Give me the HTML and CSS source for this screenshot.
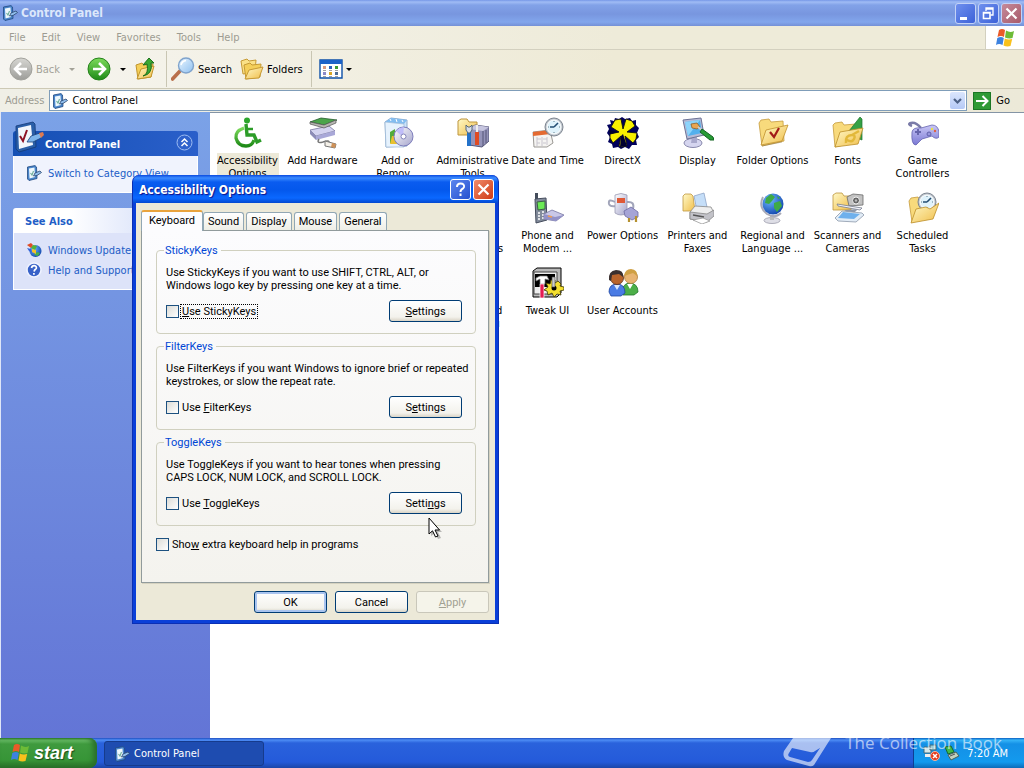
FILE: index.html
```html
<!DOCTYPE html>
<html lang="en">
<head>
<meta charset="utf-8">
<title>Control Panel</title>
<link rel="stylesheet" href="styles.css">
</head>
<body>
<svg class="defs" aria-hidden="true">
  <defs>
    <linearGradient id="gFolder" x1="0" y1="0" x2="1" y2="1"><stop offset="0" stop-color="#fff9c8"/><stop offset="1" stop-color="#f0bd48"/></linearGradient>
    <linearGradient id="gGreen" x1="0" y1="0" x2="0" y2="1"><stop offset="0" stop-color="#7ddb5c"/><stop offset="1" stop-color="#1e8a17"/></linearGradient>
    <linearGradient id="gGrey" x1="0" y1="0" x2="0" y2="1"><stop offset="0" stop-color="#d6d6d2"/><stop offset="1" stop-color="#9d9d99"/></linearGradient>
    <linearGradient id="gBlue" x1="0" y1="0" x2="1" y2="1"><stop offset="0" stop-color="#e8f5ff"/><stop offset="1" stop-color="#8fc0f0"/></linearGradient>
    <linearGradient id="gSilver" x1="0" y1="0" x2="1" y2="1"><stop offset="0" stop-color="#ffffff"/><stop offset="1" stop-color="#a5a5cc"/></linearGradient>
    <linearGradient id="gViolet" x1="0" y1="0" x2="0" y2="1"><stop offset="0" stop-color="#c9c7f5"/><stop offset="1" stop-color="#7a78d4"/></linearGradient>
    <radialGradient id="gGlobe" cx=".35" cy=".3" r=".8"><stop offset="0" stop-color="#6db8ff"/><stop offset="1" stop-color="#0c3fa8"/></radialGradient>
    <symbol id="cp" viewBox="0 0 32 32">
      <path d="M3 5 20 1 22 3 23 26 6 31 3 28Z" fill="#2a5fa8" stroke="#143a78" stroke-width=".8"/>
      <path d="M5 7 18 4 20 24 6 28Z" fill="#f2f7fd"/>
      <path d="M7 15 10 20 14 9" fill="none" stroke="#8d1226" stroke-width="2"/>
      <path d="M14 21 18 15 27 12 30 14 28 17 20 21Z" fill="#7db4ea" stroke="#1c4178" stroke-width=".8"/><path d="M26 12 30 11 31 14 28 17Z" fill="#e07a50"/>
    </symbol>
    <symbol id="cps" viewBox="0 0 16 16">
      <path d="M1.500 2 9 .600 10.500 2 11 13.500 3 15.500 1.500 14Z" fill="#4a86cc" stroke="#21497f" stroke-width=".8"/>
      <path d="M3 3.500 8.500 2.500 9 12 3.500 13.500Z" fill="#eef8fd"/><path d="M4.500 8 6 10 7.500 6" fill="none" stroke="#6fae9a" stroke-width="1.100"/>
      <path d="M7.500 11 9 8 14 6 15.500 7.500 11 10.500Z" fill="#8fbdec" stroke="#2b466f" stroke-width=".8"/>
    </symbol>
    <symbol id="flag" viewBox="0 0 20 20">
      <path d="M4 2Q7 0 10 2L9 9Q6 7 2.500 9Z" fill="#ea5a28"/><path d="M11 2.500Q15 5 19 3L17.500 10Q14 11 10 9.500Z" fill="#6dbb37"/>
      <path d="M2.300 10Q6 8 8.800 10L7.500 17Q4 15 1 17Z" fill="#3d82e0"/><path d="M9.800 10.500Q13 12 17.200 11L15.500 18Q12 19 8.500 17.500Z" fill="#f9c11c"/>
    </symbol>
    <symbol id="folder" viewBox="0 0 32 32">
      <path d="M2 6 4 3 12 2 14 5 26 4 27 24 5 29Z" fill="#f8da7c" stroke="#c59a3c" stroke-width=".8"/>
      <path d="M4 28 9 13 31 8 25 24Z" fill="url(#gFolder)" stroke="#c0902c" stroke-width=".8"/><path d="M5 29 25 25" stroke="#8b7440" opacity=".5"/>
    </symbol>
    <symbol id="clock" viewBox="0 0 20 20">
      <circle cx="10" cy="10" r="9" fill="#bcc3cb" stroke="#7d8590"/><circle cx="10" cy="10" r="7" fill="#dff2fb" stroke="#fff"/>
      <path d="M10 10 14 6M10 10H6" stroke="#234d73" stroke-width="1.600"/><path d="M10 4V5M10 15V16M4 10H5M15 10H16" stroke="#66818f"/>
    </symbol>
  </defs>
</svg>

<header class="titlebar">
  <svg class="i16"><use href="#cps"/></svg>
  <h1 class="titlebar-text">Control Panel</h1>
  <button class="cap" aria-label="Minimize"><svg viewBox="0 0 19 19"><path d="M4 13H11V16H4Z" fill="#fff"/></svg></button>
  <button class="cap" aria-label="Restore"><svg viewBox="0 0 19 19"><path d="M7 7V4H14V11H11.500M7 5H14" fill="none" stroke="#fff" stroke-width="1.300"/><path d="M4.500 8.500H11V14.500H4.500ZM4.500 9H11" fill="none" stroke="#fff" stroke-width="1.600"/></svg></button>
  <button class="cap cap-close" aria-label="Close"><svg viewBox="0 0 19 19"><path d="M4.500 4.500 14.500 14.500M14.500 4.500 4.500 14.500" stroke="#fff" stroke-width="2.200"/></svg></button>
</header>

<nav class="menubar">
  <button>File</button><button>Edit</button><button>View</button><button>Favorites</button><button>Tools</button><button>Help</button>
  <span class="brand"><svg class="i20"><use href="#flag"/></svg></span>
</nav>

<div class="toolbar">
  <button class="tool muted" disabled><svg class="i24" viewBox="0 0 24 24"><circle cx="12" cy="12" r="11" fill="url(#gGrey)" stroke="#a2a29c"/><path d="M12 6 6 12 12 18M7 12H18" fill="none" stroke="#fff" stroke-width="2.600"/></svg>Back<i class="caret"></i></button>
  <button class="tool tool-fwd" aria-label="Forward"><svg class="i24" viewBox="0 0 24 24"><circle cx="12" cy="12" r="11" fill="url(#gGreen)" stroke="#25821b"/><path d="M12 6 18 12 12 18M17 12H6" fill="none" stroke="#fff" stroke-width="2.600"/></svg><i class="caret"></i></button>
  <button class="tool" aria-label="Up"><svg class="i24" viewBox="0 0 24 24"><path d="M2 8 8 6 10 8 19 7 17 20 4 22Z" fill="#f5cf58" stroke="#c1952d"/><path d="M3 22 7 12 20 9 17 20Z" fill="url(#gFolder)" stroke="#c1952d"/><path d="M9 19Q15 17 13 7L9 8 15 1 20 6 17 6Q19 17 9 19Z" fill="#3aa832" stroke="#1b701b"/></svg></button>
  <span class="sep"></span>
  <button class="tool tool-search"><svg class="i24" viewBox="0 0 24 24"><path d="M1.500 22 9 14" stroke="#b96f4b" stroke-width="3.600" stroke-linecap="round"/><circle cx="15" cy="8.500" r="7.500" fill="url(#gBlue)" stroke="#7fa3cc" stroke-width="1.400"/><path d="M10 8Q11 4 15 3.500" fill="none" stroke="#fff" stroke-width="1.500"/></svg>Search</button>
  <button class="tool"><svg class="i24" viewBox="0 0 24 24"><path d="M1 4 7 2 9 4 16 3 15 15 3 17Z" fill="#fae187" stroke="#c69a35"/><path d="M4 8 10 6 12 8 21 7 20 20 6 22Z" fill="#f4cf5a" stroke="#c69a35"/><path d="M5 22 9 13 23 10 19 21Z" fill="url(#gFolder)" stroke="#c69a35"/></svg>Folders</button>
  <span class="sep"></span>
  <button class="tool tool-views" aria-label="Views"><svg class="i24" viewBox="0 0 24 24"><path d="M1 3H23V21H1Z" fill="#fff" stroke="#0d50a8" stroke-width="1.400"/><path d="M1 3H23V7H1Z" fill="#1c62c8"/><path d="M4 9H7V12H4Z" fill="#d79a82"/><path d="M10 9H13V12H10Z" fill="#2e62bc"/><path d="M16 9H19V12H16Z" fill="#3b9a32"/><path d="M4 15H7V18H4Z" fill="#8b89c8"/><path d="M10 15H13V18H10Z" fill="#d8a523"/><path d="M16 15H19V18H16Z" fill="#4d6d94"/><path d="M4 13.500H7M10 13.500H13M16 13.500H19M4 19.500H7M10 19.500H13M16 19.500H19" stroke="#888" stroke-width=".8"/></svg><i class="caret"></i></button>
</div>

<form class="address">
  <label for="addr">Address</label>
  <div class="combo">
    <svg class="i16"><use href="#cps"/></svg>
    <input id="addr" type="text" value="Control Panel">
    <button type="button" class="drop" aria-label="Show addresses"><svg viewBox="0 0 15 17"><path d="M4 7 7.500 10.500 11 7" fill="none" stroke="#4d6185" stroke-width="2.200"/></svg></button>
  </div>
  <button type="button" class="go"><svg class="go-icon" viewBox="0 0 18 18"><path d="M0 0H18V18H0Z" fill="#2f9a35"/><path d="M.5.500H17.500V17.500H.5Z" fill="none" stroke="#1b7624"/><path d="M3 9H14M9.500 4 14.500 9 9.500 14" fill="none" stroke="#fff" stroke-width="2"/></svg>Go</button>
</form>

<main class="main">
  <aside class="side">
    <section class="box">
      <h2 class="box-head primary"><svg class="i32"><use href="#cp"/></svg><span>Control Panel</span><button class="fold" aria-label="Collapse"><svg viewBox="0 0 17 17"><circle cx="8.500" cy="8.500" r="7.500" fill="#2f62cc" stroke="#9dbcf2"/><path d="M5.500 8 8.500 5 11.500 8M5.500 12 8.500 9 11.500 12" fill="none" stroke="#fff" stroke-width="1.500"/></svg></button></h2>
      <ul class="box-body short">
        <li><a href="#"><svg class="i16"><use href="#cps"/></svg>Switch to Category View</a></li>
      </ul>
    </section>
    <section class="box">
      <h2 class="box-head">See Also</h2>
      <ul class="box-body">
        <li><a href="#"><svg class="i16" viewBox="0 0 16 16"><circle cx="9.500" cy="9" r="6" fill="url(#gGlobe)"/><path d="M8 13 12 14 14 11 11 10Z" fill="#45b04a"/><path d="M1 3 5 1 7 3 5 6Z" fill="#e04b24"/><path d="M7 3 11 4 9 8 5 6Z" fill="#55b436"/><path d="M1 6 5 7 6 11 3 9Z" fill="#3564d8"/><path d="M6 7 10 8 10 12 6 10Z" fill="#f3c229"/></svg>Windows Update</a></li>
        <li><a href="#"><svg class="i16" viewBox="0 0 16 16"><circle cx="8" cy="8" r="7" fill="#3862c8" stroke="#eef2ff" stroke-width="1.600"/><path d="M5.500 6Q6 3.500 8.300 3.700 10.800 4 10.300 6.300 8.300 8 8 9.500M7.900 11V12.800" fill="none" stroke="#fff" stroke-width="1.700"/></svg>Help and Support</a></li>
      </ul>
    </section>
  </aside>

  <section class="icons">
    <a href="#" class="item selected"><svg class="i32" viewBox="0 0 32 32"><circle cx="15" cy="3.500" r="3" fill="#2ca52c"/><path d="M14 7 15 18H22L25 25 29 23" fill="none" stroke="#2c9c28" stroke-width="3.400"/><path d="M14 12H21" stroke="#2c9c28" stroke-width="2.500"/><path d="M12 11Q3 14 4 21 6 29 14 29 20 29 22 23" fill="none" stroke="url(#gGreen)" stroke-width="3.300"/></svg><span>Accessibility Options</span></a>
    <a href="#" class="item"><svg class="i32" viewBox="0 0 32 32"><path d="M3 13 22 9 28 14 9 19Z" fill="#d4d3f0" stroke="#77769e" stroke-width=".8"/><path d="M3 13V17L9 23V19Z" fill="#8d8cb8"/><path d="M9 19 28 14V18L9 23Z" fill="#a9a8d8"/><path d="M3 5 14 1 30 3 17 8Z" fill="#4ba44a" stroke="#245b2c" stroke-width=".8"/><path d="M3 5V7L17 11 29 6V3L17 8Z" fill="#b7b6b2" stroke="#555" stroke-width=".7"/><path d="M12 22Q9 27 16 25 23 22 22 27" fill="none" stroke="#777" stroke-width="1.500"/><path d="M18 24 29 27 28 31 18 29Z" fill="#f4f0e8" stroke="#777"/><path d="M25 26 29 27 28 31 24 30Z" fill="#cf9157"/></svg><span>Add Hardware</span></a>
    <a href="#" class="item"><svg class="i32" viewBox="0 0 32 32"><path d="M3 5 9 1 25 3 25 29 4 30Z" fill="#cde4fa" stroke="#91accb"/><path d="M3 5 22 7 25 3 9 1Z" fill="#83bdf0"/><path d="M3 5 22 7V30L4 30Z" fill="#e6f2fd" stroke="#9bb8d6" stroke-width=".7"/><path d="M8 2 9 4M14 2 15 5M20 3 21 5" stroke="#fff"/><path d="M8 15 13 12V26H8Z" fill="#52ab3a"/><path d="M10 19H16V27H8Z" fill="#e9c12f"/><circle cx="21.500" cy="19.500" r="9.500" fill="url(#gSilver)" stroke="#7c7cbb"/><path d="M21 20 14 14Q18 10 22 10Z" fill="#b8b4fb" opacity=".8"/><circle cx="21.500" cy="19.500" r="2.500" fill="#fff" stroke="#8384ba"/></svg><span>Add or Remov...</span></a>
    <a href="#" class="item"><svg class="i32" viewBox="0 0 32 32"><path d="M1 4 4 2H10L12 5H20V18H1Z" fill="url(#gFolder)" stroke="#bd953c"/><path d="M12 12 18 8 32 10V24L25 30 12 28Z" fill="#9493b9" stroke="#565678"/><path d="M12 12 18 8 32 10 26 14Z" fill="#c6c5df"/><path d="M26 14V29M29 13V26" stroke="#555577"/><path d="M18 15H22V28H18Z" fill="#df4b24"/><path d="M19 8H21V15H19Z" fill="#eee"/><path d="M10 14H14V29H10Z" fill="#2472c9"/><path d="M9 8 11 10H13L15 8V13L13 16H11L9 13Z" fill="#d9dfe8" stroke="#567"/></svg><span>Administrative Tools</span></a>
    <a href="#" class="item"><svg class="i32" viewBox="0 0 32 32"><path d="M1 15 18 13 21 26 15 30 2 30Z" fill="#f5f4f2" stroke="#9a9894"/><path d="M1 15 18 13 19 17 1 19Z" fill="#e46a31"/><path d="M5 22H9M11 22H15M5 26H8M11 26H14M5 20V29M10 20V29M15 20V28" stroke="#c8c5ce"/><svg x="12" y="0" width="20" height="20"><use href="#clock"/></svg></svg><span>Date and Time</span></a>
    <a href="#" class="item"><svg class="i32" viewBox="0 0 32 32"><path d="M3 3 7 4 8 1 12 2 15 0 18 2 23 1 25 4 29 3 29 8 32 11 30 16 32 20 29 23 30 28 25 28 22 32 18 30 14 32 11 30 6 31 5 27 1 25 3 20 0 16 2 12 0 8 4 7Z" fill="#00005c"/><path d="M8 3 14 2 16 12 19 2 25 4 28 9 20 15 30 16 29 22 26 26 18 19 20 29 14 30 12 29 14 19 6 26 3 21 3 17 12 15 4 10Z" fill="#f8f000" stroke="#111" stroke-width=".9"/><path d="M9 14 12 15 3 17 2 13ZM14 19 16 17 20 29 13 30Z" fill="#000030"/></svg><span>DirectX</span></a>
    <a href="#" class="item"><svg class="i32" viewBox="0 0 32 32"><ellipse cx="11" cy="26" rx="9" ry="4.500" fill="#d5d5ef" stroke="#8888ac"/><path d="M10 20H15V26H9Z" fill="#a8a8cb"/><path d="M1 3 19 1 22 18 5 22Z" fill="#b8bbd6" stroke="#6c7395"/><path d="M3 5 18 3 20 16 6 19Z" fill="#53b0ed"/><path d="M3 5 18 3 6 19Z" fill="#8dd4fb"/><path d="M9 7 15 6 18 10 15 12 10 11Z" fill="#eaa652" stroke="#85551f" stroke-width=".7"/><path d="M16 10 21 14" stroke="#ccc" stroke-width="2"/><path d="M20 12 31 20 32 23 28 23 18 15Z" fill="#279b35" stroke="#126421"/></svg><span>Display</span></a>
    <a href="#" class="item"><svg class="i32" viewBox="0 0 32 32"><use href="#folder"/><path d="M13 15 17 20 22 11" fill="none" stroke="#a31b18" stroke-width="2.200"/></svg><span>Folder Options</span></a>
    <a href="#" class="item"><svg class="i32" viewBox="0 0 32 32"><path d="M1 8 3 6 10 5 12 8 24 7 24 25 3 30Z" fill="#f8da7c" stroke="#c59a3c" stroke-width=".8"/><path d="M17 14 28 0 30 2V23L25 21V15Z" fill="#35a044" stroke="#1e742f" stroke-width=".7"/><path d="M3 30 8 15 31 11 26 27Z" fill="url(#gFolder)" stroke="#bd8e27" stroke-width=".8"/><path d="M14 26Q13 18 20 18 24 18 22 22 20 26 15 23M20 18 27 14" fill="none" stroke="#e2b83a" stroke-width="2.500"/></svg><span>Fonts</span></a>
    <a href="#" class="item"><svg class="i32" viewBox="0 0 32 32"><path d="M5 9Q0 7 4 6 9 5 14 11" fill="none" stroke="#7a7ba8" stroke-width="2.500"/><path d="M5 15Q6 10 14 11L25 8Q31 8 32 15V20Q29 23 25 19L15 22 9 28Q4 28 5 15Z" fill="url(#gViolet)" stroke="#6563b0" stroke-width=".8"/><path d="M8 15H14M11 12V18" stroke="#6665ac" stroke-width="2"/><circle cx="22" cy="17" r="2" fill="#9997dc" stroke="#6060aa"/><circle cx="25" cy="12" r="1.200" fill="#e7e24b"/><circle cx="28" cy="14" r="1.200" fill="#e06244"/></svg><span>Game Controllers</span></a>

    <a href="#" class="item col4"><span class="i32"></span><span>Network Connections</span></a>
    <a href="#" class="item"><svg class="i32" viewBox="0 0 32 32"><path d="M3 1H6V8H3Z" fill="#444d5b"/><path d="M3 7 14 6 15 28 4 31Z" fill="#828b9b" stroke="#454d5d"/><path d="M5 10 13 9V17L6 18Z" fill="#6bea55" stroke="#3b5d45"/><path d="M6 21H8M10 20H12M6 24H8M10 23H12M6 27H8M10 26H12" stroke="#fff" stroke-width="1.700"/><path d="M12 22 20 18 32 23 24 29 12 27Z" fill="#c9c8e8" stroke="#7776a1" stroke-width=".8"/><path d="M12 22 23 25 32 23 24 29 12 27Z" fill="#9392c8"/><path d="M16 24 20 25" stroke="#ef9f53" stroke-width="1.500"/></svg><span>Phone and Modem ...</span></a>
    <a href="#" class="item"><svg class="i32" viewBox="0 0 32 32"><path d="M8 10Q1 6 2 12 3 15 9 14M20 10Q28 9 26 17" fill="none" stroke="#a2a5ba" stroke-width="2"/><path d="M8 3Q14 0 20 3V21Q14 25 8 21Z" fill="url(#gSilver)" stroke="#9999b3" stroke-width=".8"/><path d="M10 6H18V11H10Z" fill="#df5936"/><path d="M17 19 24 15 31 20V25L25 28 18 24Z" fill="#a5a4d6" stroke="#6c6ba2" stroke-width=".8"/><path d="M22 26V30M29 24V30" stroke="#b5912f" stroke-width="2.200"/></svg><span>Power Options</span></a>
    <a href="#" class="item"><svg class="i32" viewBox="0 0 32 32"><path d="M1 4 3 2H9L11 4 13 19H1Z" fill="url(#gFolder)" stroke="#bf973f" stroke-width=".8"/><path d="M12 4 22 1 25 15 15 19Z" fill="#c5def8" stroke="#8fa4c6" stroke-width=".8"/><path d="M8 20 13 14 29 15 32 21 25 30 8 27Z" fill="#eeeeee" stroke="#888" stroke-width=".8"/><path d="M8 20 25 22 32 18V24L25 30 8 27Z" fill="#c2c2c8" stroke="#888" stroke-width=".8"/><path d="M11 23 22 25" stroke="#555" stroke-width="1.500"/><path d="M11 28 21 26 28 29 20 32Z" fill="#fff" stroke="#999" stroke-width=".8"/></svg><span>Printers and Faxes</span></a>
    <a href="#" class="item"><svg class="i32" viewBox="0 0 32 32"><ellipse cx="15" cy="28.500" rx="8" ry="3" fill="#dedee6" stroke="#9b9ba9" stroke-width=".8"/><path d="M13 23H17V28H13Z" fill="#bbb"/><path d="M6 5Q1 15 10 22 18 27 24 21" fill="none" stroke="#aaabb8" stroke-width="2"/><circle cx="16" cy="12" r="10.500" fill="url(#gGlobe)"/><path d="M9 6 14 2 18 5 15 9 12 12 8 11ZM17 11 23 9 25 14 20 20 17 16ZM20 4 23 6 21 7Z" fill="#3faa46"/></svg><span>Regional and Language ...</span></a>
    <a href="#" class="item"><svg class="i32" viewBox="0 0 32 32"><path d="M1 3 4 1H10L12 4H19V18H1Z" fill="url(#gFolder)" stroke="#bd953c" stroke-width=".8"/><path d="M15 5 21 2 31 3V13L17 14Z" fill="#c2c2c2" stroke="#6a6a6a" stroke-width=".8"/><circle cx="24" cy="8.500" r="3.500" fill="#666" stroke="#eee"/><circle cx="24" cy="8.500" r="1.200" fill="#bbb"/><path d="M5 12 30 16 28 18 6 14Z" fill="#f4f4fa" stroke="#747b8d" stroke-width=".8"/><path d="M12 18 26 17 20 23Z" fill="#8f98a8"/><path d="M3 26 10 19 30 21 32 23 24 30 6 29Z" fill="#e2ecf6" stroke="#8b98aa" stroke-width=".8"/><path d="M11 20 28 22 22 27 6 26Z" fill="#6fb0ec"/></svg><span>Scanners and Cameras</span></a>
    <a href="#" class="item"><svg class="i32" viewBox="0 0 32 32"><path d="M2 9 4 6 11 5 13 8 26 7 26 25 5 30Z" fill="#f8da7c" stroke="#c59a3c" stroke-width=".8"/><svg x="10" y="0" width="20" height="20"><use href="#clock"/></svg><path d="M4 31 9 17 19 15 23 17 32 11 26 27Z" fill="url(#gFolder)" stroke="#bd8e27" stroke-width=".8"/></svg><span>Scheduled Tasks</span></a>

    <a href="#" class="item col4"><span class="i32"></span><span>Taskbar and Start Menu</span></a>
    <a href="#" class="item"><svg class="i32" viewBox="0 0 32 32"><path d="M1 4 5 1H29V26L25 30H1Z" fill="#b9b9b9" stroke="#000"/><path d="M2 5H25V27H2Z" fill="#eee" stroke="#444"/><path d="M3 7H23V20H3Z" fill="#000"/><path d="M4 11 8 9H15L17 13 13 12V17H8V12L4 14Z" fill="#fff" stroke="#777" stroke-width=".7"/><path d="M8 17H12V31H8Z" fill="#e51b52" stroke="#fff" stroke-width=".7"/><path d="M19 13H23V16L26 14 29 17 28 19 32 20V23L28 24 29 28 25 27 22 30 20 26 16 28 15 24 12 23 16 20 14 16 18 17Z" fill="#f4df30" stroke="#3a3500" stroke-width=".8"/><circle cx="22" cy="21" r="2.500" fill="#000"/><path d="M20 10H23V20H20Z" fill="#ccc" stroke="#444" stroke-width=".6"/></svg><span>Tweak UI</span></a>
    <a href="#" class="item"><svg class="i32" viewBox="0 0 32 32"><path d="M15 26Q15 17 22 16 31 16 31 25L27 28H16Z" fill="#4caf48" stroke="#22772b" stroke-width=".8"/><path d="M20 17 23 22 26 17Z" fill="#fff"/><circle cx="24" cy="10" r="6.500" fill="#e8b472" stroke="#b07c3a" stroke-width=".8"/><path d="M17 9Q18 2 24 2 31 3 30 9L26 6Z" fill="#cfa044"/><path d="M2 25Q2 17 10 17 18 17 18 26L14 29H4Z" fill="#4a7be4" stroke="#2146a1" stroke-width=".8"/><path d="M7 18 10 23 13 18Z" fill="#d9e8ff"/><circle cx="10" cy="11" r="6.500" fill="#b8642c" stroke="#5b2b11" stroke-width=".8"/><path d="M2 13Q1 4 9 3 17 3 16 10L12 7 5 8 4 14Z" fill="#3a302f"/></svg><span>User Accounts</span></a>
  </section>
</main>

<footer class="taskbar">
  <button class="start"><svg class="i20"><use href="#flag"/></svg>start</button>
  <button class="task"><svg class="i16"><use href="#cps"/></svg>Control Panel</button>
  <div class="tray">
    <svg class="i20" viewBox="0 0 20 20"><path d="M2 4H9V10H2Z" fill="#d7e8ea" stroke="#406b7a"/><path d="M8 2H14V7H8Z" fill="#9ac9d1" stroke="#406b7a"/><path d="M3 11H8V14H3Z" fill="#eee"/><circle cx="13" cy="13" r="4.500" fill="#e3391c" stroke="#f7b7a0"/><path d="M11 11 15 15M15 11 11 15" stroke="#fff" stroke-width="1.500"/></svg>
    <svg class="i16" viewBox="0 0 16 16"><path d="M1 2 7 1 10 7 4 9Z" fill="#42b947" stroke="#17682b"/><path d="M4 10 12 7 15 11 7 15Z" fill="#c5d1bd" stroke="#4a6358"/><path d="M6 11 11 9" stroke="#555"/></svg>
    <time class="time">7:20 AM</time>
  </div>
</footer>

<div class="watermark">
  <svg class="book" viewBox="0 0 50 30"><path d="M1 13 10 0H48L31 27Q29 29 26 28L4 22Q-1 19 1 13ZM6 15Q4 18 7 19L25 24Q28 24 29 22L37 10 32 13Q30 15 27 14L9 10Z" fill="#fff" fill-rule="evenodd"/></svg>
  <span>The Collection Book</span>
</div>

<div class="dialog" role="dialog" aria-labelledby="dlg">
  <header class="dlg-title">
    <h2 id="dlg">Accessibility Options</h2>
    <button class="dcap" aria-label="Help"><svg viewBox="0 0 19 19"><path d="M6 7Q6 3.500 9.500 3.500 13.500 3.500 13 7 12.500 8.500 10.500 9.500 9.500 10.500 9.500 12M9.500 13.500V16" fill="none" stroke="#fff" stroke-width="2"/></svg></button>
    <button class="dcap dcap-close" aria-label="Close"><svg viewBox="0 0 19 19"><path d="M4.500 4.500 14.500 14.500M14.500 4.500 4.500 14.500" stroke="#fff" stroke-width="2.200"/></svg></button>
  </header>
  <div class="dlg-body">
    <div class="tabs" role="tablist">
      <button class="tab active" role="tab">Keyboard</button><button class="tab" role="tab">Sound</button><button class="tab" role="tab">Display</button><button class="tab" role="tab">Mouse</button><button class="tab" role="tab">General</button>
    </div>
    <div class="panel">
      <fieldset class="group">
        <legend>StickyKeys</legend>
        <p>Use StickyKeys if you want to use SHIFT, CTRL, ALT, or<br>Windows logo key by pressing one key at a time.</p>
        <div class="row"><label class="check focus"><input type="checkbox"><span><u>U</u>se StickyKeys</span></label><button class="btn"><span><u>S</u>ettings</span></button></div>
      </fieldset>
      <fieldset class="group">
        <legend>FilterKeys</legend>
        <p>Use FilterKeys if you want Windows to ignore brief or repeated<br>keystrokes, or slow the repeat rate.</p>
        <div class="row"><label class="check"><input type="checkbox"><span>Use <u>F</u>ilterKeys</span></label><button class="btn"><span>S<u>e</u>ttings</span></button></div>
      </fieldset>
      <fieldset class="group">
        <legend>ToggleKeys</legend>
        <p>Use ToggleKeys if you want to hear tones when pressing<br>CAPS LOCK, NUM LOCK, and SCROLL LOCK.</p>
        <div class="row"><label class="check"><input type="checkbox"><span>Use <u>T</u>oggleKeys</span></label><button class="btn"><span>Setti<u>n</u>gs</span></button></div>
      </fieldset>
      <label class="check extra"><input type="checkbox"><span>Sho<u>w</u> extra keyboard help in programs</span></label>
    </div>
    <div class="actions">
      <button class="btn default">OK</button><button class="btn">Cancel</button><button class="btn" disabled><span><u>A</u>pply</span></button>
    </div>
  </div>
</div>

<svg class="cursor" viewBox="0 0 14 22"><path d="M3 3V19L7 16 10 22 13 21 10 15H14Z" fill="#000" opacity=".25"/><path d="M1 1V17L4.500 13.800 7.500 20 10 19 7 13H11.500Z" fill="#fff" stroke="#000"/></svg>
</body>
</html>
```
FILE: styles.css
```css
* { box-sizing: border-box; }
body {
  margin: 0;
  min-height: 100vh;
  display: flex;
  flex-direction: column;
  background: #fff;
  color: #000;
  font: 11px/13px "DejaVu Sans Condensed", Tahoma, sans-serif;
  overflow: hidden;
}
button, input { font: inherit; color: inherit; margin: 0; padding: 0; border: 0; background: none; }
svg { display: block; flex: none; }
a { color: inherit; text-decoration: none; }
h1, h2, p, ul { margin: 0; padding: 0; }
ul { list-style: none; }
.defs { position: absolute; width: 0; height: 0; }
.i16 { width: 16px; height: 16px; }
.i20 { width: 20px; height: 20px; }
.i24 { width: 24px; height: 24px; }
.i32 { width: 32px; height: 32px; display: block; flex: none; }

/* Explorer window chrome */
.titlebar {
  height: 26px;
  display: flex;
  align-items: center;
  gap: 2px;
  padding: 0 2px;
  background: linear-gradient(#7697e7 0, #a0bcf5 2px, #82a2e8 5px, #7896df 14px, #82a6ec 22px, #7490d6 26px);
}
.titlebar-text { flex: 1; padding-left: 1px; color: #dce7fb; font-size: 12px; font-weight: bold; }
.cap { width: 21px; height: 21px; border: 1px solid #c3d2f7; border-radius: 3px; background: linear-gradient(135deg, #6f90ee, #3c61d8); }
.cap-close { background: linear-gradient(135deg, #c58a9a, #a85a6a); }
.menubar {
  height: 24px;
  display: flex;
  align-items: stretch;
  gap: 16px;
  padding-left: 9px;
  color: #9d9c92;
  background: linear-gradient(90deg, #f6f5f0, #eeebd9 60%);
  border-bottom: 1px solid #d3d0bf;
}
.brand { margin-left: auto; width: 39px; display: flex; align-items: center; justify-content: center; background: #fff; border-left: 1px solid #d3d0bf; }
.toolbar {
  height: 39px;
  display: flex;
  align-items: center;
  gap: 8px;
  padding: 0 9px;
  background: linear-gradient(90deg, #f6f5f0, #eeead6 60%);
  border-bottom: 1px solid #cdc9b5;
}
.tool { display: flex; align-items: center; gap: 3px; }
.muted { color: #a3a298; }
.caret { margin-left: 6px; border: 3px solid transparent; border-top-color: currentColor; border-bottom-width: 0; }
.tool-fwd { margin-left: 4px; }
.sep { width: 1px; height: 36px; background: #c9c6b3; }
.tool-search { margin-left: -4px; }
.tool-views { margin-left: -1px; }
.tool-views .caret { margin-left: 0; }
.address {
  height: 23px;
  display: flex;
  align-items: center;
  gap: 5px;
  padding-left: 5px;
  background: linear-gradient(90deg, #f0efe6, #ece9d8);
}
.address label { color: #9d9c92; }
.combo { flex: 1; height: 21px; display: flex; align-items: center; gap: 4px; padding: 0 1px 0 2px; background: #fff; border: 1px solid #7f9db9; }
.combo input { flex: 1; min-width: 0; outline: 0; }
.drop { width: 15px; height: 17px; background: linear-gradient(#dbe6fd, #b5c9f5); border-radius: 2px; }
.go { display: flex; align-items: center; gap: 5px; padding: 0 14px 0 1px; }
.go-icon { width: 18px; height: 18px; }

/* Task pane */
.main { flex: 1; display: flex; min-height: 0; }
.side {
  flex: none;
  width: 210px;
  padding: 19px 12px 0;
  border-left: 1px solid #dfe6f7;
  background: linear-gradient(#7ba2e7, #6375d6);
  display: flex;
  flex-direction: column;
  gap: 15px;
}
.box-head {
  height: 25px;
  display: flex;
  align-items: center;
  padding: 2px 5px 0 12px;
  color: #215dc6;
  background: linear-gradient(90deg, #fff 30%, #c6d3f7);
  font-size: 11px;
  border-radius: 3px 3px 0 0;
}
.primary { padding-left: 0; color: #fff; background: linear-gradient(90deg, #1550b4, #2a5fca); }
.primary .i32 { margin-top: -16px; }
.primary span { flex: 1; }
.fold { width: 17px; height: 17px; margin-top: -4px; }
.box-body { display: flex; flex-direction: column; gap: 4px; padding: 9px 12px; min-height: 57px; color: #215dc6; background: #dde3f9; border: 1px solid #fff; border-top: 0; }
.box-body.short { min-height: 37px; background: #f0f3fd; }
.box-body a { display: flex; align-items: center; gap: 6px; white-space: nowrap; }

/* Control panel items */
.icons {
  flex: 1;
  min-width: 0;
  border-top: 1px solid #8494a5;
  display: grid;
  grid-template-columns: repeat(auto-fill, 75px);
  grid-auto-rows: 75px;
  padding-top: 4px;
  align-content: start;
}
.item { display: flex; flex-direction: column; align-items: center; gap: 4px; text-align: center; }
.item span:last-child { padding: 1px; }
.item:nth-child(10) { grid-column: 10; }
.item.col4 { grid-column: 4; }
.selected span:last-child { width: 62px; padding: 1px 0; background: #ece9d8; }

/* Taskbar */
.taskbar {
  flex: none;
  height: 30px;
  display: flex;
  align-items: stretch;
  color: #fff;
  background: linear-gradient(#1f4fc0 0, #4d8df5 2px, #2a62dc 5px, #245ada 24px, #1c46a8 30px);
}
.start {
  width: 97px;
  display: flex;
  align-items: center;
  gap: 4px;
  padding: 0 10px;
  font: italic bold 18px/22px "Liberation Sans", Arial, sans-serif;
  text-shadow: 1px 1px 1px #1b4d1b;
  border-radius: 0 8px 8px 0;
  background: linear-gradient(#2c7f2c 0, #6cc06a 2px, #3f9a3e 6px, #379537 22px, #286f28 30px);
  box-shadow: inset -4px 0 5px #2a702a;
}
.task { width: 160px; height: 25px; margin: 3px 0 0 7px; padding: 0 9px; display: flex; align-items: center; gap: 4px; border-radius: 3px; background: #1e4cb0; border: 1px solid #163b8c; }
.tray { margin-left: auto; min-width: 111px; display: flex; align-items: center; gap: 2px; padding: 0 8px; border-left: 1px solid #0e3f94; background: linear-gradient(#0c5ec0 0, #35b4f8 2px, #1490e6 6px, #139aee 24px, #0d6bb8 30px); }
.time { margin-left: auto; padding-right: 8px; }
.watermark {
  position: absolute;
  right: 22px;
  bottom: 0;
  height: 30px;
  display: flex;
  gap: 12px;
  color: #fff;
  opacity: .6;
  font: 17px/10px "Open Sans", sans-serif;
  pointer-events: none;
}
.book { width: 50px; height: 30px; }

/* Dialog */
.dialog {
  position: absolute;
  left: 132px;
  top: 175px;
  width: 367px;
  background: #0a3fd8;
  border-radius: 7px 7px 0 0;
  padding: 0 3px 3px;
  border: 1px solid #0a2fb4;
  border-top: 0;
  font-family: Roboto, Arial, sans-serif;
}
.dlg-title { height: 28px; margin: 0 -3px; padding: 0 4px 0 6px; display: flex; align-items: center; gap: 2px; border-radius: 7px 7px 0 0; background: linear-gradient(#0a4ae0 0, #3c8cff 3px, #0a5cf0 7px, #0458ec 15px, #0a68ff 23px, #0448d0 28px); }
.dlg-title h2 { flex: 1; padding-top: 2px; color: #fff; font: bold 12px/16px "DejaVu Sans Condensed", Tahoma, sans-serif; text-shadow: 1px 1px 1px #0f1089; }
.dcap { width: 21px; height: 21px; border: 1px solid #fff; border-radius: 3px; background: linear-gradient(135deg, #5c86ee, #2550cf); }
.dcap-close { background: linear-gradient(135deg, #ef8b6b, #cf3a14); }
.dlg-body { padding: 7px 6px 7px 5px; background: #ece9d8; }
.tabs { display: flex; align-items: flex-end; gap: 2px; height: 20px; }
.tab { height: 18px; padding: 0 4px; border: 1px solid #91a7b4; border-bottom: 0; border-radius: 3px 3px 0 0; background: linear-gradient(#fff, #eeeee6); }
.tab.active { z-index: 1; height: 21px; margin: 0 -2px -1px 0; padding: 0 7px 2px; border-top: 2px solid #e9a33c; background: #fcfcfe; }
.panel { padding: 13px 12px 28px 14px; border: 1px solid #919b9c; background: linear-gradient(#fcfcfe, #f4f3ee); box-shadow: 1px 1px 0 #d5d2c0; }
.group { margin: 0 0 6px; padding: 9px 13px 11px 9px; border: 1px solid #d0d0bf; border-radius: 4px; min-width: 0; }
.group legend { padding: 0 3px 0 1px; margin-left: -2px; color: #0046d5; }
.group p { white-space: nowrap; }
.row { display: flex; align-items: center; justify-content: space-between; margin-top: 8px; }
.check { display: inline-flex; align-items: center; gap: 2px; }
.check span { padding: 0 1px; }
.check.focus span { outline: 1px dotted #000; }
.check input { appearance: none; width: 13px; height: 13px; border: 1px solid #1d5180; background: linear-gradient(135deg, #dcdcd7, #fff); }
.extra { margin-top: 6px; }
.btn { width: 73px; height: 22px; border: 1px solid #003c74; border-radius: 3px; background: linear-gradient(#fff, #f3f2ec 80%, #d9d4c6); }
.btn.default { box-shadow: inset 0 0 0 2px #a9c4ef; }
.btn:disabled { color: #a1a192; border-color: #c9c7ba; background: #f5f4ea; }
.actions { display: flex; justify-content: flex-end; gap: 8px; padding-top: 8px; }
.cursor { position: absolute; left: 428px; top: 517px; width: 14px; height: 22px; }
```
